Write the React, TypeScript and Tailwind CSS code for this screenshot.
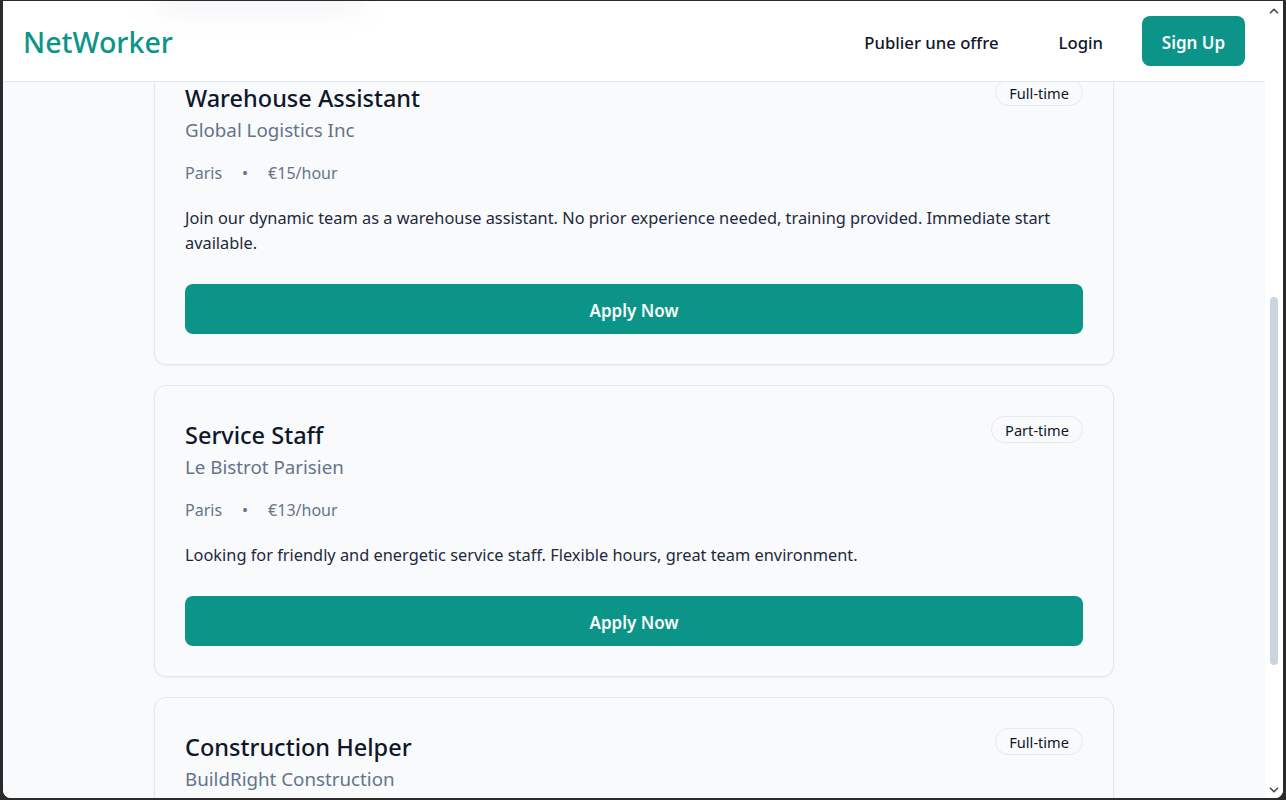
import { ChevronDown, ChevronUp } from "lucide-react";

const jobs = [
  {
    title: "Warehouse Assistant",
    company: "Global Logistics Inc",
    type: "Full-time",
    place: "Paris",
    pay: "€15/hour",
    text: "Join our dynamic team as a warehouse assistant. No prior experience needed, training provided. Immediate start available.",
  },
  {
    title: "Service Staff",
    company: "Le Bistrot Parisien",
    type: "Part-time",
    place: "Paris",
    pay: "€13/hour",
    text: "Looking for friendly and energetic service staff. Flexible hours, great team environment.",
  },
  {
    title: "Construction Helper",
    company: "BuildRight Construction",
    type: "Full-time",
    place: "Paris",
    pay: "€14/hour",
    text: "Join our construction team. Physical work, on-site training provided.",
  },
];

function JobCard({ job }: { job: (typeof jobs)[number] }) {
  return (
    <article className="shrink-0 rounded-xl border border-[#e2e8f0] bg-[#f9fafc] p-[30px] shadow-[0_1px_2px_rgba(15,23,42,0.05)]">
      <div className="flex items-start justify-between">
        <div>
          <h2 className="mt-[3px] text-[23.5px] leading-[32px] font-medium text-[#0f172a]">{job.title}</h2>
          <p className="mt-[2px] text-[18.75px] leading-[28px] text-[#64748b]">{job.company}</p>
        </div>
        <span className="rounded-full border border-[#e2e8f0] px-[13px] pt-px text-[14.6px] leading-[24px] text-[#0f172a]">
          {job.type}
        </span>
      </div>
      <div className="mt-[17px] flex gap-5 text-[16px] leading-[24px] text-[#64748b]">
        <span>{job.place}</span>
        <span>•</span>
        <span>{job.pay}</span>
      </div>
      <p className="mt-[21px] text-[16.35px] leading-[25px] text-[#1e293b]">{job.text}</p>
      <button className="mt-[28px] block h-[50px] w-full rounded-lg bg-[#0d9488] pt-[4px] text-[17px] font-semibold text-[#f8fafc]">
        Apply Now
      </button>
    </article>
  );
}

export default function App() {
  return (
    <div className="h-[800px] w-[1286px] overflow-hidden bg-[#2b2b2b] pt-px pr-[3px] pb-[2px] pl-[3px] font-['Noto_Sans',sans-serif]">
      <div className="flex h-full overflow-hidden rounded-b-lg bg-white">
        <div className="flex min-w-0 flex-1 flex-col overflow-hidden bg-[#f9fafc]">
          <header className="relative z-10 flex h-[81px] shrink-0 items-center justify-between border-b border-[#e2e8f0] bg-white pr-5 pl-5">
            <div className="absolute top-[-10px] left-[150px] h-[22px] w-[210px] rounded-full bg-[#f3f4f6] blur-md" />
            <span className="relative pt-[3px] text-[28.6px] font-medium text-[#0d9488]">NetWorker</span>
            <nav className="flex items-center text-[16.7px] font-medium text-[#0f172a]">
              <a className="px-5 pt-[3px]">Publier une offre</a>
              <a className="ml-[20px] px-5 pt-[3px]">Login</a>
              <a className="ml-[19px] flex h-[50px] w-[103px] items-center justify-center rounded-lg bg-[#0d9488] pt-[3px] text-[17px] font-semibold text-[#f8fafc]">
                Sign Up
              </a>
            </nav>
          </header>
          <main className="min-h-0 flex-1 overflow-hidden">
            <div className="mx-auto -mt-[34px] flex w-[960px] flex-col gap-5">
              {jobs.map((job) => (
                <JobCard key={job.title} job={job} />
              ))}
            </div>
          </main>
        </div>
        <div className="flex w-[18px] shrink-0 flex-col items-center bg-white text-[#505050]">
          <ChevronUp size={14} strokeWidth={3} className="mt-[3px]" />
          <div className="mt-[279px] h-[368px] w-2 rounded-full bg-[#cbd5e1]" />
          <ChevronDown size={14} strokeWidth={3} className="mt-auto mb-[1px]" />
        </div>
      </div>
    </div>
  );
}
